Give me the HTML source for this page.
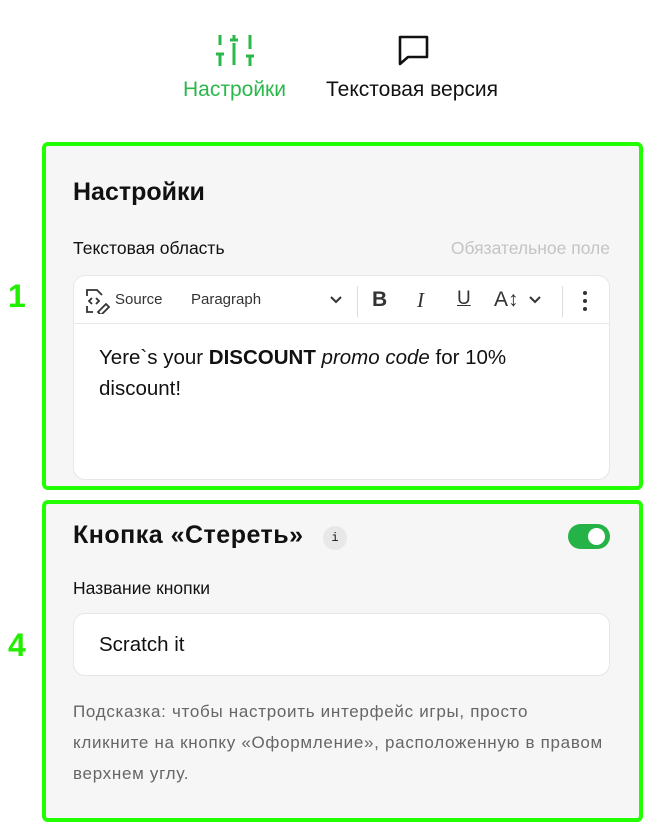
<!DOCTYPE html>
<html><head><meta charset="utf-8"><style>
*{margin:0;padding:0;box-sizing:border-box}
body{width:660px;height:836px;background:#fff;font-family:"Liberation Sans",sans-serif;color:#111;position:relative;overflow:hidden}
.a{position:absolute;white-space:nowrap}
.box{position:absolute;left:42px;width:601px;border:4px solid #22ff00;border-radius:6px;background:#f6f6f6}
.num{position:absolute;font-weight:bold;font-size:32px;color:#22ee00}
.ed{position:absolute;left:73px;top:275px;width:537px;height:205px;background:#fff;border:1px solid #e6e6e6;border-radius:12px}
.tb{position:absolute;left:0;top:0;right:0;height:48px;border-bottom:1px solid #e8e8e8}
.inp{position:absolute;left:73px;top:613px;width:537px;height:63px;background:#fff;border:1px solid #e6e6e6;border-radius:12px}
</style></head><body>
<svg class="a" style="left:216px;top:33px" width="40" height="34" viewBox="0 0 40 34" fill="none" stroke="#2bb84a" stroke-width="3">
<path d="M4 2v10M0 21h8M4 21v12M18 2v4M14 7h8M18 10v22M34 2v14M30 23h8M34 23v10"/></svg>
<svg class="a" style="left:396px;top:34px" width="36" height="34" viewBox="0 0 36 34" fill="none" stroke="#111" stroke-width="2.6" stroke-linejoin="round">
<path d="M4 3h27v20H12l-8 7z"/></svg>
<div class="a" style="left:183px;top:78px;font-size:21px;color:#2bb84a">Настройки</div>
<div class="a" style="left:326px;top:78px;font-size:21px">Текстовая версия</div>

<div class="box" style="top:142px;height:348px"></div>
<div class="box" style="top:500px;height:322px"></div>
<div class="num" style="left:8px;top:278px">1</div>
<div class="num" style="left:8px;top:627px">4</div>

<div class="a" style="left:73px;top:178px;font-size:25px;font-weight:bold">Настройки</div>
<div class="a" style="left:73px;top:238px;font-size:17.5px">Текстовая область</div>
<div class="a" style="right:50px;top:238px;font-size:17.5px;color:#c4c4c4">Обязательное поле</div>
<div class="ed"><div class="tb">
<svg class="a" style="left:11px;top:12px" width="26" height="26" viewBox="0 0 26 26" fill="none" stroke="#333" stroke-width="1.8"><path d="M2 8V2h10l5 5M2 18v6h6M7 10l-3 3 3 3M11 10l3 3-3 3M13 24l8-8 3 3-8 8z"/></svg>
<div class="a" style="left:41px;top:15px;font-size:15px;color:#333">Source</div>
<div class="a" style="left:117px;top:15px;font-size:15px;color:#333">Paragraph</div>
<svg class="a" style="left:256px;top:20px" width="12" height="8" viewBox="0 0 12 8" fill="none" stroke="#333" stroke-width="2"><path d="M1 1l5 5 5-5"/></svg>
<div class="a" style="left:283px;top:10px;width:1px;height:31px;background:#ddd"></div>
<div class="a" style="left:298px;top:12px;font-size:21px;font-weight:bold;color:#333">B</div>
<div class="a" style="left:343px;top:12px;font-size:21px;font-style:italic;font-family:'Liberation Serif',serif;color:#333">I</div>
<div class="a" style="left:383px;top:12px;font-size:19px;text-decoration:underline;color:#333">U</div>
<div class="a" style="left:420px;top:12px;font-size:21px;color:#333">A↕</div>
<svg class="a" style="left:455px;top:20px" width="12" height="8" viewBox="0 0 12 8" fill="none" stroke="#333" stroke-width="2"><path d="M1 1l5 5 5-5"/></svg>
<div class="a" style="left:488px;top:10px;width:1px;height:31px;background:#ddd"></div>
<svg class="a" style="left:508px;top:14px" width="6" height="22" viewBox="0 0 6 22" fill="#333"><circle cx="3" cy="3" r="2"/><circle cx="3" cy="11" r="2"/><circle cx="3" cy="19" r="2"/></svg>
</div>
<div class="a" style="left:25px;top:66px;font-size:20.5px;line-height:31px">Yere`s your <b>DISCOUNT</b> <i>promo code</i> for 10%<br>discount!</div>
</div>

<div class="a" style="left:73px;top:521px;font-size:25px;font-weight:bold;letter-spacing:0.5px">Кнопка «Стереть»</div>
<div class="a" style="left:323px;top:526px;width:24px;height:24px;border-radius:12px;background:#e8e8e8;font-size:12px;font-family:'Liberation Mono',monospace;text-align:center;line-height:24px">i</div>
<div class="a" style="left:568px;top:524px;width:42px;height:25px;border-radius:13px;background:#25b347"><div class="a" style="left:20px;top:4px;width:17px;height:17px;border-radius:9px;background:#fff"></div></div>
<div class="a" style="left:73px;top:578px;font-size:17.5px">Название кнопки</div>
<div class="inp"><div class="a" style="left:25px;top:19px;font-size:20.5px">Scratch it</div></div>
<div class="a" style="left:73px;top:696px;font-size:17px;line-height:31px;color:#666;letter-spacing:0.7px">Подсказка: чтобы настроить интерфейс игры, просто<br>кликните на кнопку «Оформление», расположенную в правом<br>верхнем углу.</div>
</body></html>
